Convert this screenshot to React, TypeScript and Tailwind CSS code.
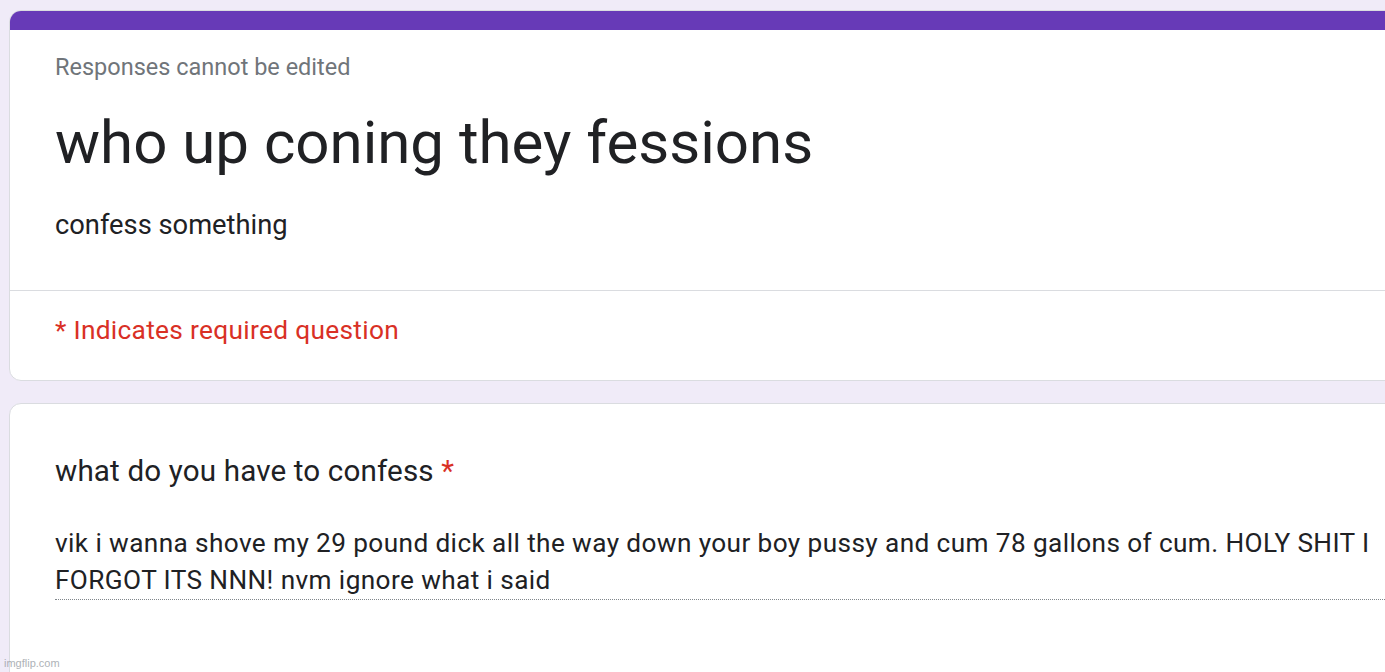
export default function App() {
  return (
    <div
      className="relative w-[1385px] h-[672px] overflow-hidden bg-[#f0ebf8] pl-[9px] pt-[10px]"
      style={{ fontFamily: "Roboto, 'Liberation Sans', sans-serif" }}
    >
      {/* header card */}
      <div className="w-[1440px] rounded-[12px] border border-[#dadce0] bg-white overflow-hidden">
        <div className="h-[19px] bg-[#673ab7]" />
        <div className="pl-[45px] pt-[22px]">
          <p className="text-[23.5px] leading-[30px] text-[#70757a]">Responses cannot be edited</p>
          <h1 className="mt-[25px] text-[60px] leading-[72px] text-[#202124]">who up coning they fessions</h1>
          <p className="mt-[30px] text-[27.3px] leading-[32px] text-[#202124]">confess something</p>
        </div>
        <div className="mt-[49px] h-px bg-[#dadce0]" />
        <p className="pl-[45px] pt-[23px] pb-[34px] text-[26.3px] leading-[32px] tracking-[0.3px] text-[#d93025]">
          * Indicates required question
        </p>
      </div>

      {/* question card */}
      <div className="mt-[22px] w-[1440px] h-[300px] rounded-[12px] border border-[#dadce0] bg-white pl-[45px] pt-[49px]">
        <p className="text-[29.6px] leading-[36px] tracking-[0.15px] text-[#202124]">
          what do you have to confess <span className="text-[#d93025]">*</span>
        </p>
        <div className="mt-[36px] w-[1330px] border-b border-dotted border-[#80868b] text-[26.2px] leading-[37px] tracking-[0.4px] text-[#202124]">
          vik i wanna shove my 29 pound dick all the way down your boy pussy and cum 78 gallons of cum. HOLY SHIT I FORGOT ITS NNN! nvm ignore what i said
        </div>
      </div>

      <span className="absolute left-[4px] top-[655px] text-[11px] text-[#9aa0a6] opacity-80" style={{ fontFamily: "'Liberation Sans', sans-serif" }}>
        imgflip.com
      </span>
    </div>
  );
}
